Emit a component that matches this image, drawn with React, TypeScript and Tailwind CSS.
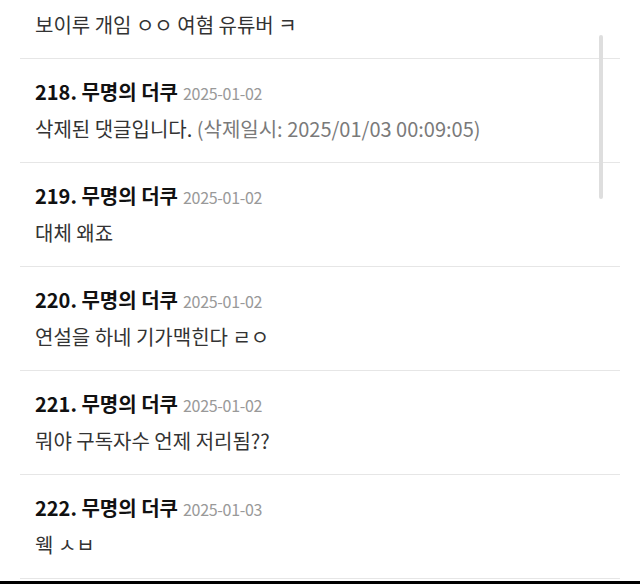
import React from "react";

const rows = [
  { n: 218, date: "2025-01-02", body: "삭제된 댓글입니다.", extra: " (삭제일시: 2025/01/03 00:09:05)" },
  { n: 219, date: "2025-01-02", body: "대체 왜죠" },
  { n: 220, date: "2025-01-02", body: "연설을 하네 기가맥힌다 ㄹㅇ" },
  { n: 221, date: "2025-01-02", body: "뭐야 구독자수 언제 저리됨??" },
  { n: 222, date: "2025-01-03", body: "웩 ㅅㅂ" },
];

export default function App() {
  return (
    <div
      className="relative w-[640px] h-[584px] overflow-hidden bg-white"
      style={{ fontFamily: '"Noto Sans CJK KR", "Noto Sans", sans-serif' }}
    >
      <div className="mx-5">
        <div className="border-b border-[#e6e6e6] pt-3 pb-5 pl-[15px]">
          <p className="text-[20px] leading-[26px] text-[#333]">보이루 개임 ㅇㅇ 여혐 유튜버 ㅋ</p>
        </div>
        {rows.map((r) => (
          <div key={r.n} className="border-b border-[#e6e6e6] pt-[20px] pb-[20px] pl-[15px]">
            <p className="h-[26px] leading-[26px] whitespace-nowrap">
              <span className="text-[20px] leading-[26px] font-bold text-[#111]">{r.n}. 무명의 더쿠</span>
              <span className="ml-[5px] text-[16px] leading-[20px] text-[#999] tracking-[-0.3px]">{r.date}</span>
            </p>
            <p className="mt-[11px] text-[20px] leading-[26px] text-[#333] whitespace-nowrap">
              {r.body}
              {r.extra && <span className="text-[#7a7a7a]">{r.extra}</span>}
            </p>
          </div>
        ))}
      </div>
      <div className="absolute left-[599px] top-[35px] w-[4px] h-[164px] rounded-full bg-[#dedede]" />
      <div className="absolute left-0 right-0 bottom-0 h-[3px] bg-black" />
    </div>
  );
}
